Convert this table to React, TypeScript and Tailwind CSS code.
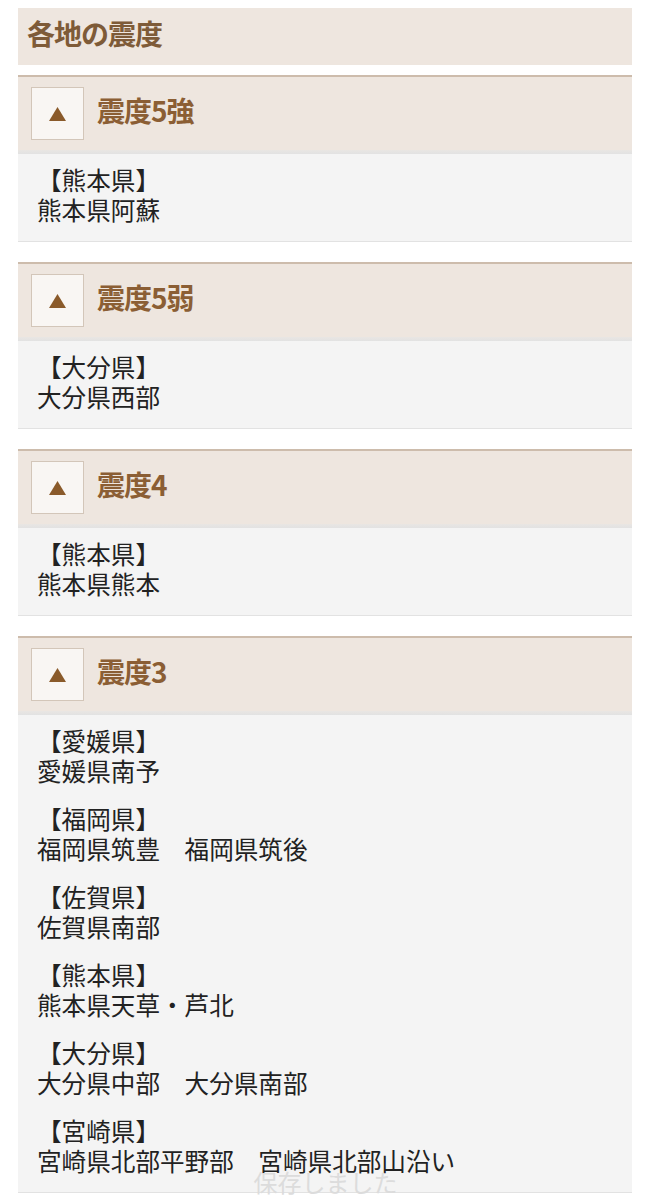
import React from 'react';

interface Area {
  pref: string;
  places: string[];
}

interface Level {
  label: string;
  areas: Area[];
}

const levels: Level[] = [
  { label: '震度5強', areas: [{ pref: '熊本県', places: ['熊本県阿蘇'] }] },
  { label: '震度5弱', areas: [{ pref: '大分県', places: ['大分県西部'] }] },
  { label: '震度4', areas: [{ pref: '熊本県', places: ['熊本県熊本'] }] },
  {
    label: '震度3',
    areas: [
      { pref: '愛媛県', places: ['愛媛県南予'] },
      { pref: '福岡県', places: ['福岡県筑豊', '福岡県筑後'] },
      { pref: '佐賀県', places: ['佐賀県南部'] },
      { pref: '熊本県', places: ['熊本県天草・芦北'] },
      { pref: '大分県', places: ['大分県中部', '大分県南部'] },
      { pref: '宮崎県', places: ['宮崎県北部平野部', '宮崎県北部山沿い'] },
    ],
  },
];

const jp = { fontFamily: '"Noto Sans CJK JP", "Noto Sans", sans-serif' };

const LevelSection: React.FC<{ level: Level }> = ({ level }) => (
  <section className="mb-5 border-b border-[#e2e2e2]">
    {/* Header */}
    <div className="flex items-center h-[75px] border-t-2 border-[#cdbcac] bg-[#eee6df] pl-[13px]">
      <button className="flex items-center justify-center w-[53px] h-[53px] bg-[#f9f6f3] border border-[#d3c6b9]">
        <svg width="17" height="14" viewBox="0 0 17 14">
          <polygon points="8.5,0 17,14 0,14" fill="#8a5a2a" />
        </svg>
      </button>
      <h3 className="ml-[13px] mb-[7px] text-[28px] leading-[34px] font-bold text-[#8b5e34] tracking-[-1px]">{level.label}</h3>
    </div>
    <div className="h-[4px] bg-gradient-to-b from-[#e9e6e3] to-[#e2e2e2]" />
    {/* Body */}
    <div className="bg-[#f4f4f4] pl-[19px] pt-[10px] pb-[17px] text-[24.6px] leading-[30px] text-[#222]">
      {level.areas.map((a, i) => (
        <div key={i} className={i > 0 ? 'mt-[18px]' : ''}>
          <div>【{a.pref}】</div>
          <div>{a.places.join('\u3000')}</div>
        </div>
      ))}
    </div>
  </section>
);

export default function App() {
  return (
    <div className="relative min-h-[1200px] bg-white px-[18px] pt-[8px] pr-[19px]" style={jp}>
      {/* Title */}
      <div className="flex items-center h-[57px] bg-[#eee6df] pl-[9px] mb-[10px]">
        <h2 className="mb-[8px] text-[28px] leading-[34px] font-bold text-[#7e5b38] tracking-[-1px]">各地の震度</h2>
      </div>

      {levels.map((lv) => (
        <LevelSection key={lv.label} level={lv} />
      ))}

      {/* Toast */}
      <div className="absolute left-0 right-0 top-[1168px] flex justify-center pointer-events-none">
        <span className="text-[24px] leading-[28px] text-[#dcdcdc]">保存しました</span>
      </div>
    </div>
  );
}
